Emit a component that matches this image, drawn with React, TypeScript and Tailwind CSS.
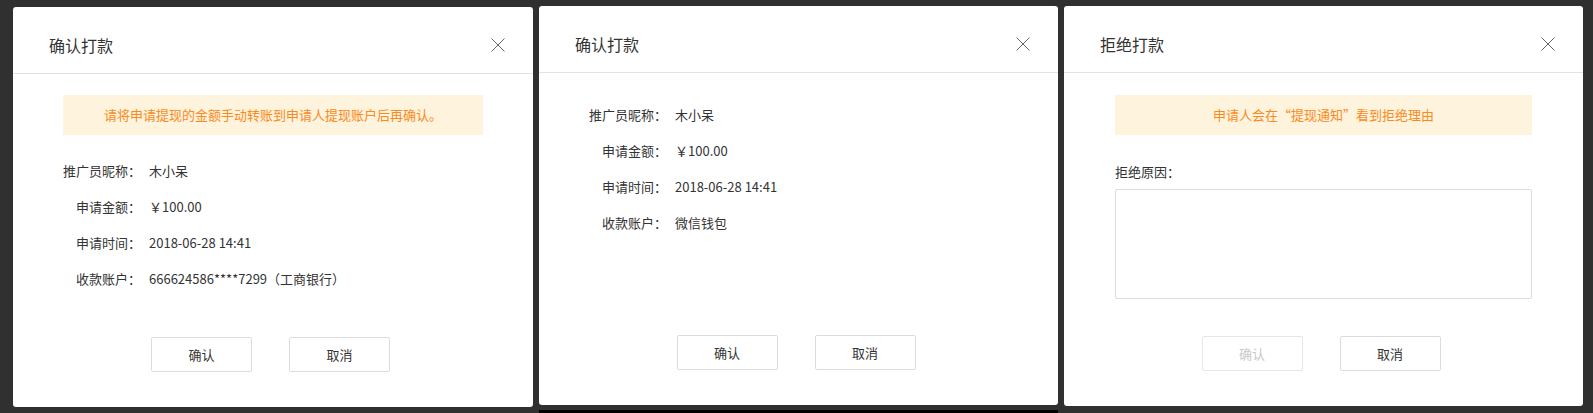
import React from "react";

const font = { fontFamily: '"Noto Sans CJK SC", "Noto Sans", sans-serif' };

const CloseIcon = () => (
  <svg width="14" height="14" viewBox="0 0 14 14" className="text-[#666]">
    <path d="M0.5 0.5L13.5 13.5M13.5 0.5L0.5 13.5" stroke="currentColor" strokeWidth="1" fill="none" />
  </svg>
);

const Header = ({ title }: { title: string }) => (
  <div className="flex h-[67px] shrink-0 items-start justify-between border-b border-[#e3e3e3] pl-[36px] pr-[28px] pt-[27px]">
    <span className="text-[16px] leading-[22px] text-[#333]">{title}</span>
    <button className="mt-[4px]">
      <CloseIcon />
    </button>
  </div>
);

const Notice = ({ children }: { children: React.ReactNode }) => (
  <div className="flex h-[40px] items-center justify-center bg-[#fef3dc] text-[13px] text-[#fb8a1c]">
    {children}
  </div>
);

const Row = ({ label, value }: { label: string; value: string }) => (
  <div className="flex h-[36px] items-center text-[13px] text-[#333]">
    <span className="w-[78px] text-right">{label}</span>
    <span className="ml-[8px]">{value}</span>
  </div>
);

const Footer = ({ disabled }: { disabled?: boolean }) => (
  <div className="flex shrink-0 justify-center gap-[37px] pb-[35px] pr-[5px]">
    <button
      className={
        "h-[35px] w-[101px] rounded-[2px] border bg-white text-[13px] " +
        (disabled ? "border-[#e6e6e6] text-[#c8c8c8]" : "border-[#dcdcdc] text-[#333]")
      }
    >
      确认
    </button>
    <button className="h-[35px] w-[101px] rounded-[2px] border border-[#dcdcdc] bg-white text-[13px] text-[#333]">
      取消
    </button>
  </div>
);

export default function App() {
  return (
    <div style={font} className="relative flex h-[413px] w-[1593px] items-start overflow-hidden bg-[#303030] pl-[13px]">
      {/* 确认打款 - 银行卡 */}
      <div className="mt-[7px] flex h-[400px] w-[520px] flex-col rounded-[3px] bg-white">
        <Header title="确认打款" />
        <div className="flex-1 px-[50px] pt-[21px]">
          <Notice>请将申请提现的金额手动转账到申请人提现账户后再确认。</Notice>
          <div className="mt-[18px]">
            <Row label="推广员昵称：" value="木小呆" />
            <Row label="申请金额：" value="￥100.00" />
            <Row label="申请时间：" value="2018-06-28 14:41" />
            <Row label="收款账户：" value="666624586****7299（工商银行）" />
          </div>
        </div>
        <Footer />
      </div>

      {/* 确认打款 - 微信 */}
      <div className="ml-[6px] mt-[6px] flex h-[399px] w-[519px] flex-col rounded-[3px] bg-white">
        <Header title="确认打款" />
        <div className="flex-1 px-[50px] pt-[24px]">
          <Row label="推广员昵称：" value="木小呆" />
          <Row label="申请金额：" value="￥100.00" />
          <Row label="申请时间：" value="2018-06-28 14:41" />
          <Row label="收款账户：" value="微信钱包" />
        </div>
        <Footer />
      </div>

      {/* 拒绝打款 */}
      <div className="ml-[6px] mt-[6px] flex h-[400px] w-[519px] flex-col rounded-[3px] bg-white">
        <Header title="拒绝打款" />
        <div className="flex-1 px-[51px] pt-[22px]">
          <Notice>申请人会在“提现通知”看到拒绝理由</Notice>
          <div className="mt-[27px] text-[13px] leading-[20px] text-[#333]">拒绝原因：</div>
          <textarea className="mt-[7px] block h-[110px] w-full resize-none rounded-[2px] border border-[#dcdcdc] outline-none" />
        </div>
        <Footer disabled />
      </div>

      <div className="absolute bottom-0 left-[539px] h-[3px] w-[519px] bg-black" />
    </div>
  );
}
